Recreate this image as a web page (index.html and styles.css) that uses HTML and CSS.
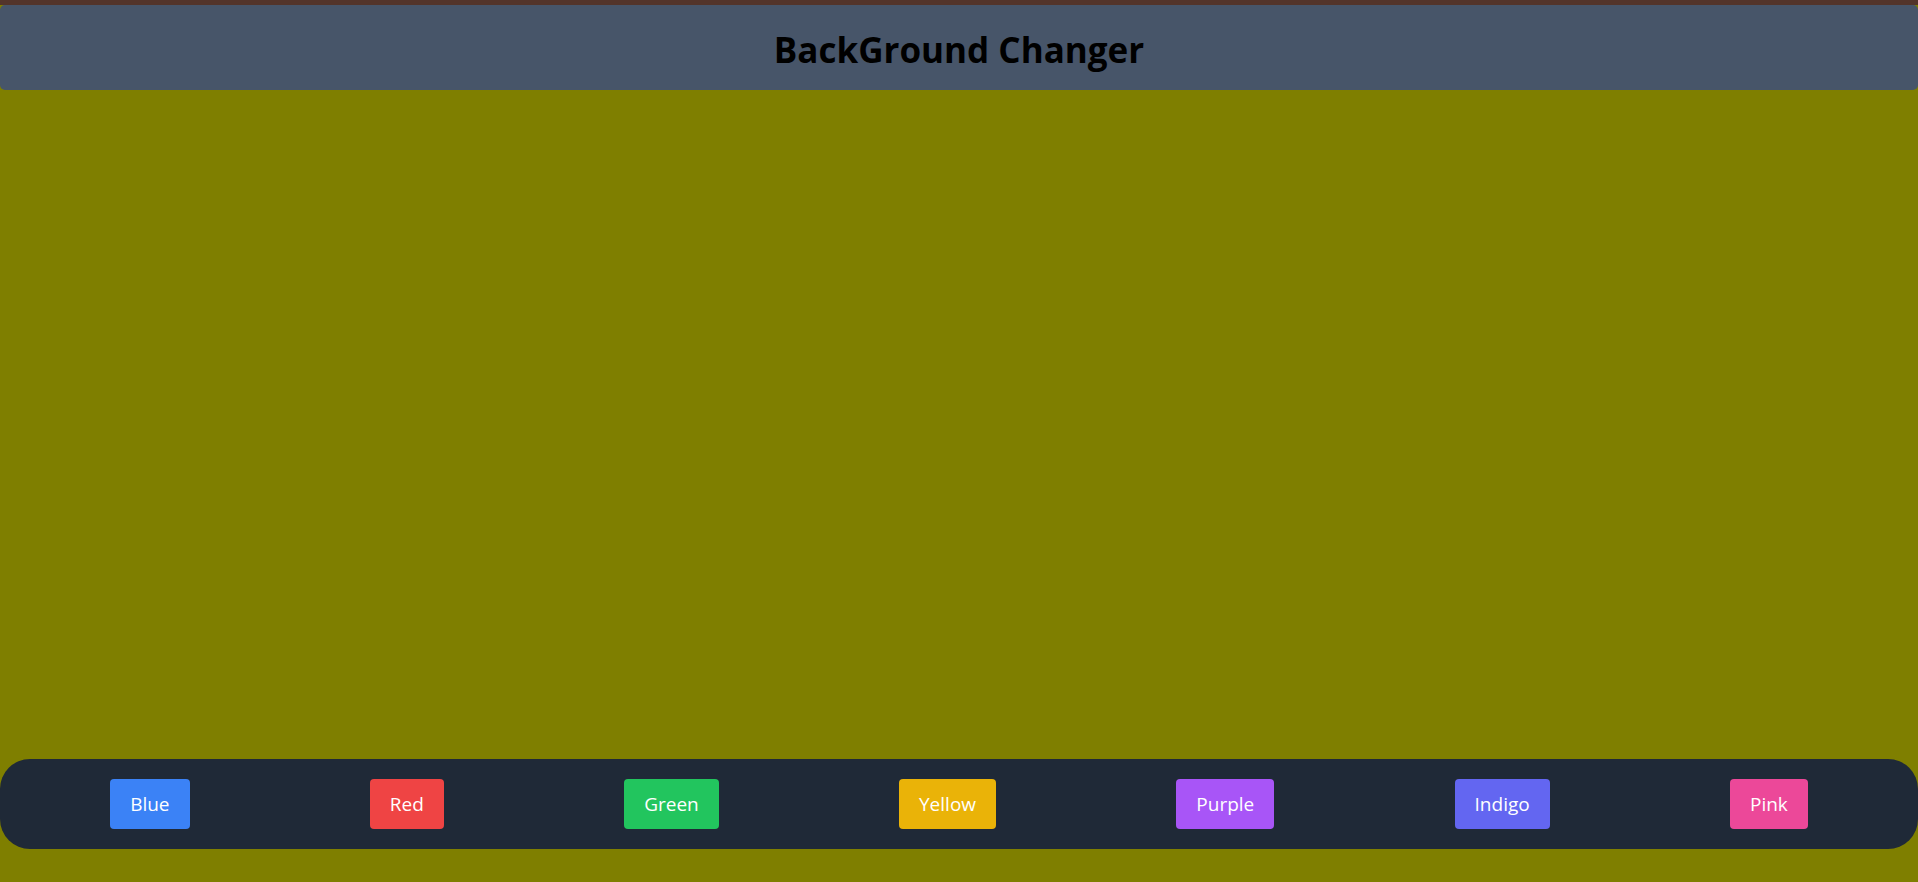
FILE: index.html
```html
<!DOCTYPE html>
<html lang="en">
<head>
<meta charset="utf-8">
<title>BackGround Changer</title>
<link rel="stylesheet" href="styles.css">
</head>
<body>
<div class="page">
  <div class="strip"></div>
  <header class="header"><h1 class="title">BackGround Changer</h1></header>
  <main class="canvas"></main>
  <nav class="bar">
    <button class="btn btn-blue">Blue</button>
    <button class="btn btn-red">Red</button>
    <button class="btn btn-green">Green</button>
    <button class="btn btn-yellow">Yellow</button>
    <button class="btn btn-purple">Purple</button>
    <button class="btn btn-indigo">Indigo</button>
    <button class="btn btn-pink">Pink</button>
  </nav>
</div>
</body>
</html>
```
FILE: styles.css
```css
html, body {
  margin: 0;
  padding: 0;
  height: 100%;
}
body {
  background: #7f7f00;
  font-family: "Open Sans", "Noto Sans", "Liberation Sans", sans-serif;
}
.page {
  height: 100vh;
  display: flex;
  flex-direction: column;
}
.strip {
  height: 5px;
  background: #53342a;
}
.header {
  height: 85px;
  box-sizing: border-box;
  padding-top: 4px;
  background: #475569;
  border-radius: 5px;
  display: flex;
  align-items: center;
  justify-content: center;
}
.title {
  margin: 0;
  font-size: 35px;
  font-weight: 700;
  color: #000;
  line-height: 1;
}
.canvas {
  flex: 1;
}
.bar {
  margin-bottom: 33px;
  padding: 20px;
  background: #1f2937;
  border-radius: 30px;
  display: flex;
  justify-content: space-around;
}
.btn {
  height: 50px;
  padding: 0 20px;
  border: 0;
  border-radius: 4px;
  color: #fff;
  font-family: inherit;
  font-size: 19px;
  line-height: 50px;
}
.btn-blue { background: #3b82f6; }
.btn-red { background: #ef4444; }
.btn-green { background: #22c55e; }
.btn-yellow { background: #eab308; }
.btn-purple { background: #a855f7; }
.btn-indigo { background: #6366f1; }
.btn-pink { background: #ec4899; }
```
